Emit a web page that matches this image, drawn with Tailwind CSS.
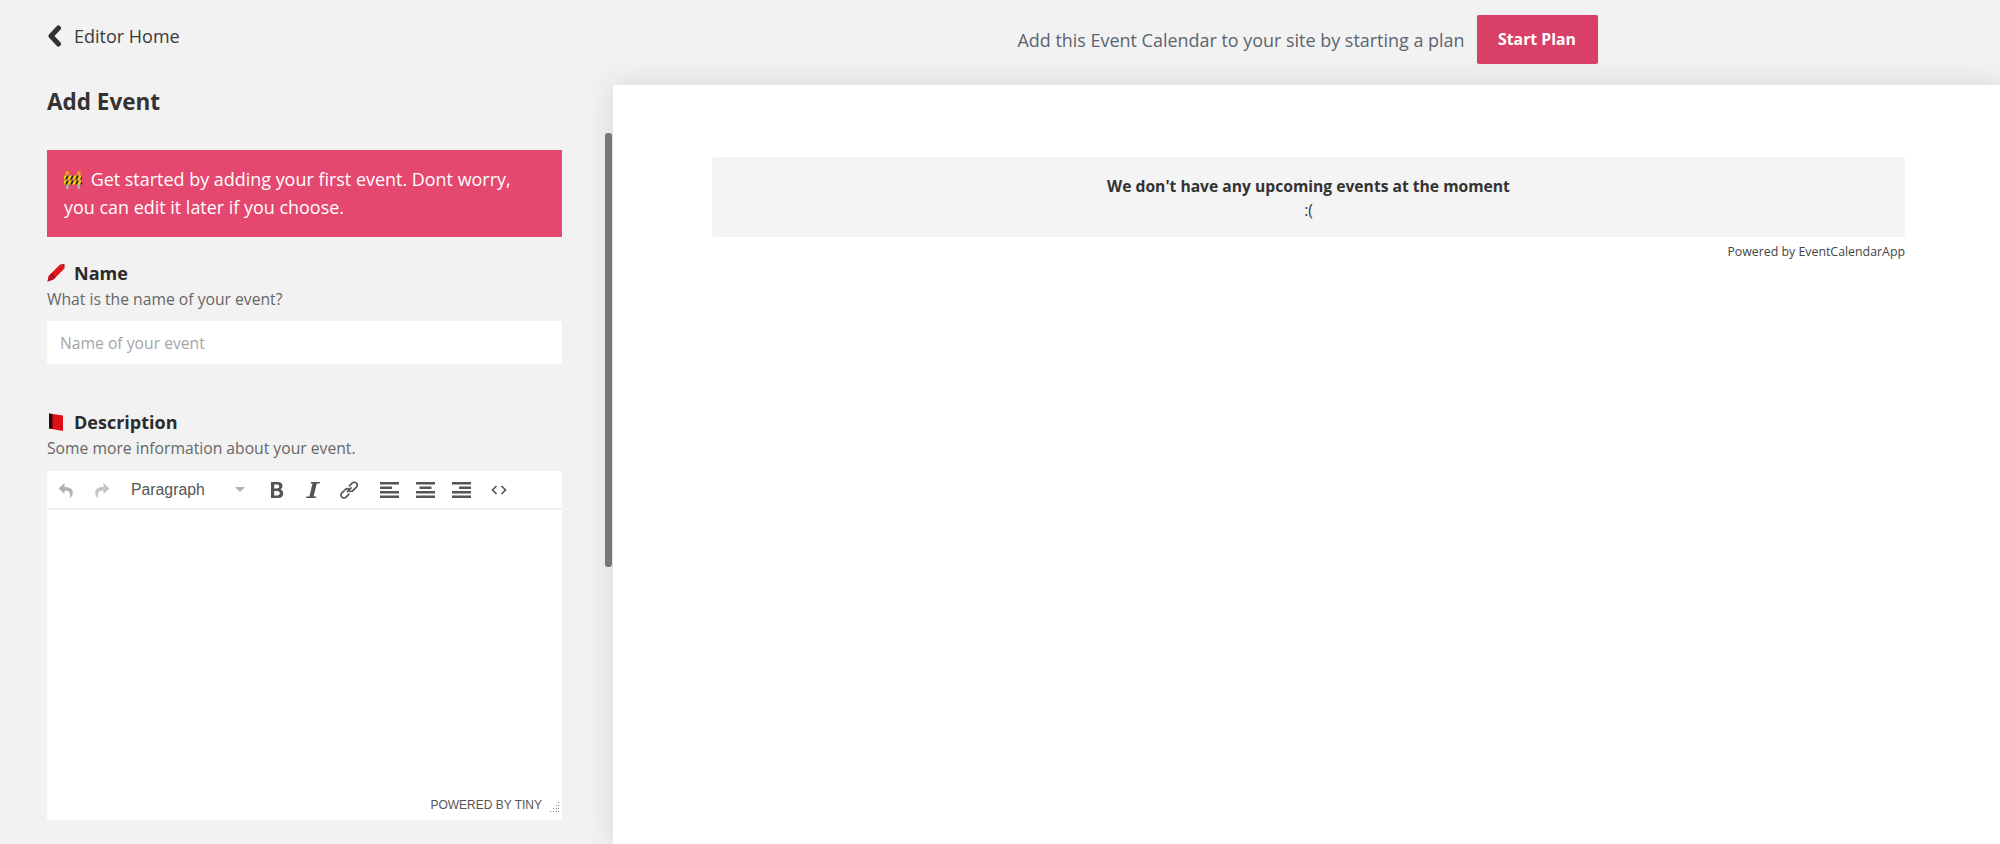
<!DOCTYPE html>
<html lang="en">
<head>
  <meta charset="UTF-8" />
  <title>Add Event</title>
  <script src="https://cdn.jsdelivr.net/npm/@tailwindcss/browser@4"></script>
</head>
<body class="bg-[#f2f2f2] h-[844px] overflow-hidden font-['Open_Sans',sans-serif] text-[#333]">

  <div class="flex h-[844px]">
    <!-- left column -->
    <div class="relative w-[613px] shrink-0 pl-[47px] pr-[51px]">
      <a href="#" class="flex items-center gap-[12px] h-[72px]">
        <svg class="w-[15px] h-[22px]" viewBox="0 0 15 22"><path d="M11.500 3 4 11l7.500 8" fill="none" stroke="#333" stroke-width="5" stroke-linecap="round" stroke-linejoin="round"/></svg>
        <span class="text-[18px] leading-[24px] text-[#3a3a3a]">Editor Home</span>
      </a>

      <h1 class="text-[22.500px] leading-[30px] font-bold text-[#333] mt-[15px]">Add Event</h1>

      <div class="mt-[33px] h-[87px] bg-[#e4486f] text-white text-[17.950px] leading-[28px] px-[17px] py-[15px]">
        <svg class="inline-block w-[18px] h-[18px] mr-[4px] align-[-3px]" viewBox="0 0 18 18">
          <rect x="2" y="2" width="2.500" height="16" fill="#a9adb0"/><rect x="13.500" y="2" width="2.500" height="16" fill="#a9adb0"/>
          <circle cx="3.200" cy="2" r="2" fill="#f39a1e"/><circle cx="14.800" cy="2" r="2" fill="#f39a1e"/>
          <rect x="0" y="4.500" width="18" height="4" fill="#f6c915"/>
          <rect x="0" y="9.500" width="18" height="4" fill="#f6c915"/>
          <path d="M1 8.500 3 4.500H5L3 8.500zM6 8.500 8 4.500H10L8 8.500zM11 8.500 13 4.500H15L13 8.500zM16 8.500 18 4.500V8.500zM1 13.500 3 9.500H5L3 13.500zM6 13.500 8 9.500H10L8 13.500zM11 13.500 13 9.500H15L13 13.500zM16 13.500 18 9.500V13.500z" fill="#222"/>
        </svg>
        Get started by adding your first event. Dont worry, you can edit it later if you choose.
      </div>

      <div class="mt-[24px] flex items-center gap-[9px] h-[24px]">
        <svg class="w-[18px] h-[18px]" viewBox="0 0 18 18"><path d="M13 .5 17.500 4.500 6.500 15.500 .5 17.500 2 11.500z" fill="#e0161f"/><path d="M13 .5 17.500 0 17.500 4.500z" fill="#a80f16"/><path d="M4 9.500 8 14" stroke="#8c0c12" stroke-width="1.200"/><path d="M2 11.500 6.500 15.500 .5 17.500z" fill="#b5121a"/></svg>
        <span class="text-[18px] leading-[24px] font-bold text-[#2b2b2b]">Name</span>
      </div>
      <p class="text-[15.700px] leading-[24px] text-[#666] mt-[2px]">What is the name of your event?</p>
      <input type="text" placeholder="Name of your event" class="mt-[10px] block w-full h-[43px] bg-white rounded-[2px] px-[13px] text-[15.700px] placeholder:text-[#a5a5a5] outline-none" />

      <div class="mt-[46px] flex items-center gap-[9px] h-[24px]">
        <svg class="w-[18px] h-[18px]" viewBox="0 0 18 18"><path d="M2 .5 16 2.500V18L2 15.500z" fill="#dd0f18"/><path d="M2 .5 5.500 1V16L2 15.500z" fill="#35080a"/></svg>
        <span class="text-[18px] leading-[24px] font-bold text-[#2b2b2b]">Description</span>
      </div>
      <p class="text-[15.700px] leading-[24px] text-[#666] mt-[2px]">Some more information about your event.</p>

      <div class="mt-[11px] bg-white rounded-[2px] h-[349px] flex flex-col">
        <div class="flex items-center h-[39px] pl-[1px] border-b-2 border-[#f0f0f0] font-['Liberation_Sans',sans-serif] text-[#555]">
          <button class="w-9 flex justify-center">
            <svg class="w-[18px] h-[18px]" viewBox="0 0 18 18" fill="#b3b3b3"><path d="M7.500 2 1.500 7.500 7.500 13V9.500c3 0 5 .8 5.500 3.500.3 1.500 0 3-.8 4.500 3-1.800 4-4.500 3.500-7-.6-3-3.500-4.500-8.200-4.500z"/></svg>
          </button>
          <button class="w-9 flex justify-center">
            <svg class="w-[18px] h-[18px]" viewBox="0 0 18 18" fill="#c4c4c4"><path d="M10.500 2l6 5.500-6 5.500V9.500c-3 0-5 .8-5.500 3.500-.3 1.500 0 3 .8 4.500-3-1.800-4-4.500-3.500-7 .6-3 3.500-4.500 8.200-4.500z"/></svg>
          </button>
          <div class="w-[139px] flex items-center justify-between pl-[11px] pr-[14px] text-[15.800px]">
            <span>Paragraph</span>
            <span class="w-0 h-0 border-x-[5px] border-x-transparent border-t-[5px] border-t-[#aab2bb]"></span>
          </div>
          <button class="w-9 flex justify-center">
            <svg class="w-[14px] h-[16px]" viewBox="0 0 14 16"><path fill="#555" fill-rule="evenodd" d="M1 0h6.500C10.800 0 12.500 1.500 12.500 4c0 1.600-.8 2.800-2 3.400 1.700.5 2.700 2 2.700 4 0 2.900-2 4.600-5.300 4.600H1zM4.200 2.600v3.900h2.700c1.400 0 2.300-.7 2.300-2s-.9-1.900-2.300-1.900zM4.200 9v4.400h3.100c1.500 0 2.500-.8 2.500-2.200S8.800 9 7.300 9z"/></svg>
          </button>
          <button class="w-9 flex justify-center">
            <svg class="w-[14px] h-[16px]" viewBox="0 0 14 16"><path fill="#555" d="M5 0h9l-.4 1.600h-2.900L7.600 14.400h2.700L10 16H0l.4-1.600h3L6.500 1.600H4.600z"/></svg>
          </button>
          <button class="w-9 flex justify-center">
            <svg class="w-[20px] h-[20px]" viewBox="0 0 19 19" fill="none" stroke="#555" stroke-width="1.600" stroke-linecap="round"><path d="M8 11 11.500 7.500"/><path d="M10 5.500 12.500 3a2.800 2.800 0 0 1 4 0 2.800 2.800 0 0 1 0 3.800l-3.300 3.300a2.800 2.800 0 0 1-4 0"/><path d="M9.500 13.500 6.700 16.200a2.800 2.800 0 0 1-4 0 2.800 2.800 0 0 1 0-3.800L6 9a2.800 2.800 0 0 1 4 0"/></svg>
          </button>
          <button class="w-9 flex justify-center ml-[4px]">
            <svg class="w-[19px] h-[16px]" viewBox="0 0 19 16" fill="#555"><rect width="19" height="2.500"/><rect y="4.500" width="12" height="2.500"/><rect y="9" width="19" height="2.500"/><rect y="13.500" width="19" height="2.500"/></svg>
          </button>
          <button class="w-9 flex justify-center">
            <svg class="w-[19px] h-[16px]" viewBox="0 0 19 16" fill="#555"><rect width="19" height="2.500"/><rect x="3.500" y="4.500" width="12" height="2.500"/><rect y="9" width="19" height="2.500"/><rect y="13.500" width="19" height="2.500"/></svg>
          </button>
          <button class="w-9 flex justify-center">
            <svg class="w-[19px] h-[16px]" viewBox="0 0 19 16" fill="#555"><rect width="19" height="2.500"/><rect x="7" y="4.500" width="12" height="2.500"/><rect y="9" width="19" height="2.500"/><rect y="13.500" width="19" height="2.500"/></svg>
          </button>
          <button class="w-9 flex justify-center ml-[2px]">
            <svg class="w-[16px] h-[10px]" viewBox="0 0 16 10" fill="none" stroke="#555" stroke-width="1.700"><path d="M5.500 1 1.500 5l4 4M10.500 1l4 4-4 4"/></svg>
          </button>
        </div>
        <div class="flex-1"></div>
        <div class="flex items-center justify-end h-[24px] pb-[7px] font-['Liberation_Sans',sans-serif] text-[12px] text-[#555]">
          <span>POWERED BY TINY</span>
          <svg class="w-[12px] h-[12px] ml-[6px] mr-[2px] mt-[7px]" viewBox="0 0 12 12" fill="#888"><rect x="10" y="0" width="1" height="1"/><rect x="8" y="3" width="1" height="1"/><rect x="10" y="3" width="1" height="1"/><rect x="5" y="6" width="1" height="1"/><rect x="8" y="6" width="1" height="1"/><rect x="10" y="6" width="1" height="1"/><rect x="2" y="9" width="1" height="1"/><rect x="5" y="9" width="1" height="1"/><rect x="8" y="9" width="1" height="1"/><rect x="10" y="9" width="1" height="1"/></svg>
        </div>
      </div>

      <!-- scroll thumb -->
      <div class="absolute left-[605px] top-[133px] w-[7px] h-[434px] bg-[#777] rounded-[3px]"></div>
    </div>

    <!-- right column -->
    <div class="flex-1 flex flex-col min-w-0">
      <div class="h-[85px] shrink-0 flex items-start justify-center pt-[14px] pl-[3px]">
        <span class="text-[17.950px] leading-[52px] text-[#5b6470]">Add this Event Calendar to your site by starting a plan</span>
        <a href="#" class="ml-[11px] w-[123px] h-[51px] flex items-center justify-center bg-[#d94068] border border-[#eee] rounded-[3px] text-white text-[15.800px] font-bold">Start Plan</a>
      </div>
      <div class="flex-1 bg-white shadow-[0_0_30px_rgba(0,0,0,0.12)] pt-[72px] pl-[99px] pr-[95px]">
        <div class="h-[80px] bg-[#f4f4f4] rounded-[2px] flex flex-col items-center justify-center text-[15.650px] leading-[24px] pt-[1px]">
          <p class="font-bold text-[#333]">We don't have any upcoming events at the moment</p>
          <p class="text-[#333]">:(</p>
        </div>
        <p class="mt-[6px] text-right text-[12.350px] leading-[18px] text-[#444]">Powered by EventCalendarApp</p>
      </div>
    </div>
  </div>

</body>
</html>
